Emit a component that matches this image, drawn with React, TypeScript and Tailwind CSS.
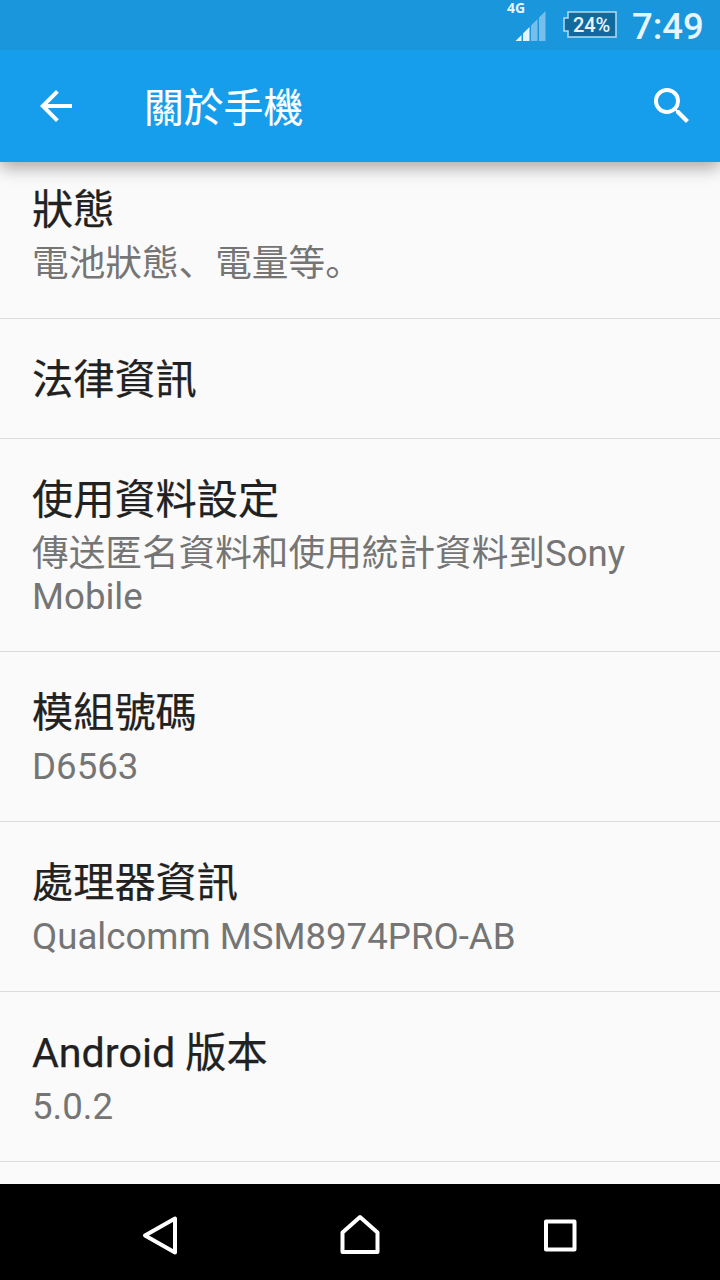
import React from 'react';

type InfoItem = {
  title: string;
  summary?: string;
  height: string;
};

const ITEMS: InfoItem[] = [
  { title: '狀態', summary: '電池狀態、電量等。', height: 'h-[170px]' },
  { title: '法律資訊', height: 'h-[120px]' },
  { title: '使用資料設定', summary: '傳送匿名資料和使用統計資料到Sony Mobile', height: 'h-[213px]' },
  { title: '模組號碼', summary: 'D6563', height: 'h-[170px]' },
  { title: '處理器資訊', summary: 'Qualcomm MSM8974PRO-AB', height: 'h-[170px]' },
  { title: 'Android 版本', summary: '5.0.2', height: 'h-[170px]' },
];

const App: React.FC = () => {
  return (
    <div className="flex h-[1280px] w-[720px] flex-col overflow-hidden bg-[#fafafa] font-['Roboto','Noto_Sans_CJK_SC',sans-serif]">
      <StatusBar />
      <AppBar />
      <main className="flex-1 overflow-hidden">
        {/* list is scrolled slightly, the first row starts under the app bar */}
        <ul className="-mt-[13px]">
          {ITEMS.map((item) => (
            <InfoRow key={item.title} item={item} />
          ))}
        </ul>
      </main>
      <NavBar />
    </div>
  );
};

const StatusBar = () => (
  <div className="relative z-20 flex h-[50px] shrink-0 bg-[#1a96dc] pl-[507px] text-[#e8f4fc]">
    <SignalIcon />
    <div className="relative mt-[11px] ml-[13px] h-[28px] w-[56px]">
      <svg className="absolute inset-0" width="56" height="28" viewBox="0 0 56 28">
        <path d="M5 1H53V26H5V20H1V7H5Z" fill="#116a9d" stroke="#b5dcf3" strokeWidth="1.5" />
      </svg>
      <span className="relative block pl-[10px] text-[20px] leading-[28px] font-medium tracking-[-0.1px]">24%</span>
    </div>
    <span className="ml-[13px] text-[36.5px] leading-[54px] font-medium">7:49</span>
  </div>
);

const SignalIcon = () => (
  <div className="flex w-[43px] flex-col">
    <span className="h-[11px] font-['Open_Sans',sans-serif] text-[14px] leading-[15px] font-bold">4G</span>
    <svg className="ml-[8px]" width="32" height="31" viewBox="0 0 32 31">
      <path d="M0.5 30L6.5 24V30Z M8 22.5L14.5 16V30H8Z" fill="currentColor" />
      <path d="M16 14.5L22.5 8V30H16Z M24 6.5L30.5 0V30H24Z" fill="#75bfea" />
    </svg>
  </div>
);

const AppBar = () => (
  <header className="relative z-10 flex h-[112px] shrink-0 items-center bg-[#169dec] text-white shadow-[0_6px_16px_rgba(0,0,0,0.33)]">
    <button className="ml-[32px] h-[48px] w-[48px]">
      <svg width="48" height="48" viewBox="0 0 24 24" fill="currentColor">
        <path d="M20 11H7.83l5.59-5.59L12 4l-8 8 8 8 1.41-1.41L7.83 13H20v-2z" />
      </svg>
    </button>
    <h1 className="ml-[64px] flex-1 pt-[5px] text-[39.8px] leading-[48px] [-webkit-text-stroke:0.2px_currentColor]">關於手機</h1>
    <button className="mr-[24px] h-[48px] w-[48px]">
      <svg width="48" height="48" viewBox="0 0 24 24" fill="currentColor">
        <path d="M15.5 14h-.79l-.28-.27A6.471 6.471 0 0 0 16 9.5 6.5 6.5 0 1 0 9.5 16c1.61 0 3.09-.59 4.23-1.57l.27.28v.79l5 4.99L20.49 19l-4.99-5zm-6 0C7.01 14 5 11.99 5 9.5S7.01 5 9.5 5 14 7.01 14 9.5 11.99 14 9.5 14z" />
      </svg>
    </button>
  </header>
);

const InfoRow = ({ item }: { item: InfoItem }) => (
  <li className={`border-b border-[#dcdcdc] px-[32px] pt-[37px] ${item.height}`}>
    <h2 className="text-[41.2px] leading-[49px] text-[#212121] [-webkit-text-stroke:0.25px_currentColor]">{item.title}</h2>
    {item.summary && <p className="mt-[7px] text-[36.65px] leading-[43px] text-[#757575]">{item.summary}</p>}
  </li>
);

const NavBar = () => (
  <nav className="flex h-[96px] shrink-0 items-center justify-center gap-[152px] bg-black pt-[12px] text-white">
    <svg width="48" height="48" viewBox="0 0 48 48" fill="none" stroke="currentColor" strokeWidth="4" strokeLinejoin="round">
      <path d="M9 21.5L39 4.5V38.5Z" />
    </svg>
    <svg width="48" height="48" viewBox="0 0 48 48" fill="none" stroke="currentColor" strokeWidth="4" strokeLinejoin="round">
      <path d="M24 3L41.5 18.5V38H6.5V18.5Z" />
    </svg>
    <svg width="48" height="48" viewBox="0 0 48 48" fill="none" stroke="currentColor" strokeWidth="4" strokeLinejoin="round">
      <path d="M10 7.5H38.5V35.5H10Z" />
    </svg>
  </nav>
);

export default App;
